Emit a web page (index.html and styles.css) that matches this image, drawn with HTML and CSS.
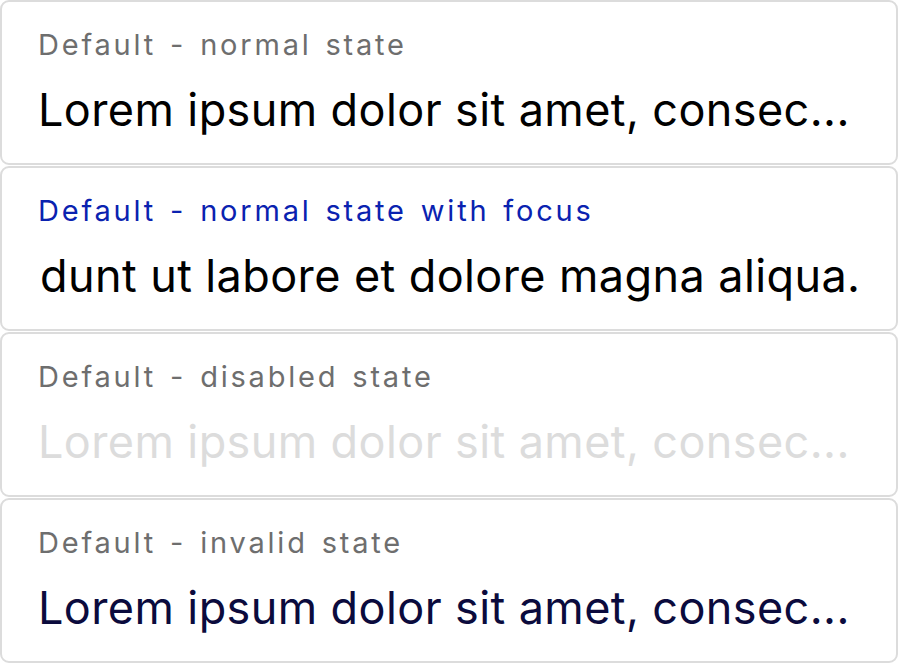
FILE: index.html
```html
<!DOCTYPE html>
<html>
<head>
<meta charset="utf-8">
<link rel="stylesheet" href="styles.css">
</head>
<body>
<div class="stack">
  <div class="field">
    <div class="label">Default - normal state</div>
    <div class="value"><span class="text">Lorem ipsum dolor sit amet, consec...</span></div>
  </div>
  <div class="field focus">
    <div class="label">Default - normal state with focus</div>
    <div class="value"><span class="text">dunt ut labore et dolore magna aliqua.</span></div>
  </div>
  <div class="field disabled">
    <div class="label">Default - disabled state</div>
    <div class="value"><span class="text">Lorem ipsum dolor sit amet, consec...</span></div>
  </div>
  <div class="field invalid">
    <div class="label">Default - invalid state</div>
    <div class="value"><span class="text">Lorem ipsum dolor sit amet, consec...</span></div>
  </div>
</div>
</body>
</html>
```

FILE: styles.css
```css
html, body {
  margin: 0;
  padding: 0;
  background: #ffffff;
}
body {
  font-family: Inter, "Noto Sans", "Liberation Sans", sans-serif;
}
.stack {
  width: 898px;
  display: flex;
  flex-direction: column;
  gap: 1px;
}
.field {
  box-sizing: border-box;
  height: 165px;
  border: 2px solid #dcdcdc;
  border-radius: 9px;
  padding: 26px 36px 0 36px;
  display: flex;
  flex-direction: column;
  gap: 22px;
}
.label {
  font-size: 29px;
  line-height: 34px;
  letter-spacing: 2.8px;
  word-spacing: 3px;
  color: #6e6e6e;
  white-space: nowrap;
}
.value {
  font-size: 45px;
  line-height: 52px;
  letter-spacing: 0.4px;
  color: #000000;
  white-space: nowrap;
}
.focus .label { color: #0a22b0; }
.focus .value { padding-left: 2px; }
.disabled .value { color: #dcdcdc; }
.invalid .value { color: #0b0b3d; }
```
